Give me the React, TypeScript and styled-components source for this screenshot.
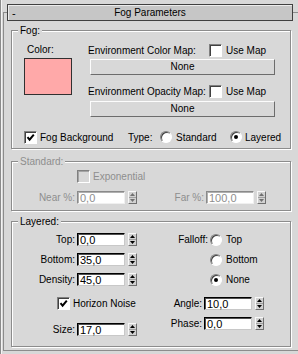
import React from "react";
import styled, { createGlobalStyle } from "styled-components";

const BG = "#d8d8d8";
const DIS = "#8e8e8e";

const GlobalStyle = createGlobalStyle`
  html, body { margin: 0; padding: 0; background: ${BG}; }
  #root { width: 298px; height: 354px; }
`;

const Page = styled.div`
  box-sizing: border-box;
  width: 298px;
  height: 354px;
  overflow: hidden;
  background: ${BG};
  border-left: 1px solid #8c8c8c;
  box-shadow: inset 1px 0 0 #f4f4f4;
  padding: 12px 0 0 2px;
  font-family: "Liberation Sans", Arial, sans-serif;
  font-size: 10px;
  color: #000;
`;

const Rollout = styled.section`
  box-sizing: border-box;
  width: 296px;
  flex-shrink: 0;
  border: 1px solid #8c8c8c;
  padding-bottom: 3px;
`;

const TitleBar = styled.div`
  box-sizing: border-box;
  height: 17px;
  margin: -9px 5px 0 3px;
  display: grid;
  grid-template-columns: 20px 1fr 20px;
  align-items: center;
  background: #c6c6c6;
  border: 1px solid #404040;
  box-shadow: inset 1px 1px 0 #ececec;
  line-height: 14px;
`;

const Collapse = styled.span`
  padding-left: 4px;
  font-size: 11px;
`;

const TitleText = styled.span`
  text-align: center;
`;

const Group = styled.div<{ $mt: number; $pt: number; $pb: number }>`
  position: relative;
  margin: ${(p) => p.$mt}px 7px 0 7px;
  border: 1px solid #8c8c8c;
  box-shadow: inset 1px 1px 0 #fff, 1px 1px 0 #fff;
  padding: ${(p) => p.$pt}px 0 ${(p) => p.$pb}px 0;
`;

const GroupLabel = styled.span<{ $disabled?: boolean }>`
  position: absolute;
  top: -7px;
  left: 6px;
  padding: 0 2px;
  background: ${BG};
  line-height: 13px;
  color: ${(p) => (p.$disabled ? DIS : "#000")};
`;

/* ---------- Fog group ---------- */
const FogTop = styled.div`
  display: grid;
  grid-template-columns: 48px 187px;
  column-gap: 16px;
  padding-left: 12px;
`;

const Column = styled.div`
  display: flex;
  flex-direction: column;
`;

const ColorLabel = styled.span`
  height: 14px;
  line-height: 14px;
  padding-left: 3px;
`;

const Swatch = styled.div`
  box-sizing: border-box;
  margin-top: 1px;
  width: 48px;
  height: 37px;
  background: #ffa9a9;
  border: 1px solid #303030;
`;

const MapRow = styled.div<{ $mt: number }>`
  display: grid;
  grid-template-columns: 121px 13px auto;
  align-items: center;
  height: 14px;
  margin-top: ${(p) => p.$mt}px;
  white-space: nowrap;
`;

const UseMap = styled.span`
  margin-left: 4px;
`;

const MapButton = styled.div<{ $mt: number }>`
  box-sizing: border-box;
  margin: ${(p) => p.$mt}px 0 0 2px;
  width: 185px;
  height: 16px;
  line-height: 14px;
  text-align: center;
  background: ${BG};
  border: 1px solid;
  border-color: #fcfcfc #6c6c6c #6c6c6c #fcfcfc;
`;

const OptionRow = styled.div`
  display: grid;
  grid-template-columns: 16px 88px 32px 16px 54px 15px auto;
  align-items: center;
  height: 14px;
  margin-top: 13px;
  padding-left: 12px;
  white-space: nowrap;
`;

/* ---------- controls ---------- */
const Box = styled.span<{ $disabled?: boolean }>`
  box-sizing: border-box;
  width: 13px;
  height: 13px;
  display: inline-flex;
  align-items: center;
  justify-content: center;
  background: ${(p) => (p.$disabled ? BG : "#fff")};
  border: 1px solid;
  border-color: #808080 #fff #fff #808080;
  box-shadow: inset 1px 1px 0 ${(p) => (p.$disabled ? "#a4a4a4" : "#404040")};
`;

const Check = ({ on, disabled }: { on?: boolean; disabled?: boolean }) => (
  <Box $disabled={disabled}>
    {on && (
      <svg width="9" height="9" viewBox="0 0 9 9">
        <path d="M1.5 4.2 L3.6 6.6 L7.8 1.6" stroke="#000" strokeWidth="2" fill="none" />
      </svg>
    )}
  </Box>
);

const RadioDot = styled.span<{ $on?: boolean }>`
  box-sizing: border-box;
  width: 12px;
  height: 12px;
  border-radius: 50%;
  background: #fff;
  border: 1px solid;
  border-color: #808080 #fff #fff #808080;
  box-shadow: inset 1px 1px 0 #404040;
  display: inline-flex;
  align-items: center;
  justify-content: center;
  &::after {
    content: "";
    width: 4px;
    height: 4px;
    border-radius: 50%;
    background: #000;
    display: ${(p) => (p.$on ? "block" : "none")};
  }
`;

const SpinRow = styled.div<{ $mt?: number }>`
  display: flex;
  align-items: center;
  height: 13px;
  margin-top: ${(p) => p.$mt ?? 0}px;
`;

const SpinLabel = styled.span<{ $w: number; $disabled?: boolean }>`
  box-sizing: border-box;
  width: ${(p) => p.$w}px;
  text-align: right;
  padding-right: 2px;
  white-space: nowrap;
  color: ${(p) => (p.$disabled ? DIS : "#000")};
`;

const Field = styled.span<{ $disabled?: boolean }>`
  box-sizing: border-box;
  width: 48px;
  height: 13px;
  background: #fff;
  border: 1px solid;
  border-color: ${(p) => (p.$disabled ? "#8a8a8a #f0f0f0 #f0f0f0 #8a8a8a" : "#000 #c8c8c8 #c8c8c8 #000")};
  box-shadow: inset 1px 1px 0 ${(p) => (p.$disabled ? "#b0b0b0" : "#505050")};
  padding-left: 2px;
  font-size: 11px;
  line-height: 12px;
  color: ${(p) => (p.$disabled ? DIS : "#000")};
`;

const Arrows = styled.span`
  box-sizing: border-box;
  margin-left: 3px;
  width: 9px;
  height: 13px;
  display: flex;
  flex-direction: column;
  border: 1px solid;
  border-color: #f8f8f8 #707070 #707070 #f8f8f8;
  background: #d2d2d2;
`;

const ArrowHalf = styled.span<{ $top?: boolean }>`
  flex: 1;
  display: flex;
  align-items: center;
  justify-content: center;
  border-bottom: ${(p) => (p.$top ? "1px solid #a0a0a0" : "none")};
`;

const ArrowGlyph = ({ up, disabled }: { up?: boolean; disabled?: boolean }) => (
  <svg width="5" height="3" viewBox="0 0 5 3">
    <path d={up ? "M0 3 L2.5 0 L5 3 Z" : "M0 0 L5 0 L2.5 3 Z"} fill={disabled ? "#707070" : "#000"} />
  </svg>
);

const Spinner = ({
  label,
  value,
  w,
  disabled,
  mt,
}: {
  label: string;
  value: string;
  w: number;
  disabled?: boolean;
  mt?: number;
}) => (
  <SpinRow $mt={mt}>
    <SpinLabel $w={w} $disabled={disabled}>
      {label}
    </SpinLabel>
    <Field $disabled={disabled}>{value}</Field>
    <Arrows>
      <ArrowHalf $top>
        <ArrowGlyph up disabled={disabled} />
      </ArrowHalf>
      <ArrowHalf>
        <ArrowGlyph disabled={disabled} />
      </ArrowHalf>
    </Arrows>
  </SpinRow>
);

/* ---------- Standard ---------- */
const CheckLine = styled.div<{ $indent: number; $disabled?: boolean; $h?: number }>`
  display: flex;
  align-items: center;
  height: ${(p) => p.$h ?? 14}px;
  padding-left: ${(p) => p.$indent}px;
  white-space: nowrap;
  color: ${(p) => (p.$disabled ? DIS : "#000")};
`;

const CheckText = styled.span`
  margin-left: 3px;
`;

const PairRow = styled.div<{ $mt: number }>`
  display: flex;
  margin-top: ${(p) => p.$mt}px;
`;

/* ---------- Layered ---------- */
const LayerRow = styled.div<{ $mt: number }>`
  display: grid;
  grid-template-columns: 125px auto;
  align-items: start;
  margin-top: ${(p) => p.$mt}px;
`;

const RadioLine = styled.div`
  display: flex;
  align-items: center;
  height: 13px;
  white-space: nowrap;
`;

const RadioLabelCell = styled.span`
  box-sizing: border-box;
  width: 73px;
  text-align: right;
  padding-right: 2px;
`;

const RadioText = styled.span`
  margin-left: 4px;
`;

export default function App() {
  return (
    <Page>
      <GlobalStyle />
      <Rollout>
        <TitleBar>
          <Collapse>-</Collapse>
          <TitleText>Fog Parameters</TitleText>
          <span />
        </TitleBar>

        <Group $mt={9} $pt={12} $pb={4}>
          <GroupLabel>Fog:</GroupLabel>
          <FogTop>
            <Column>
              <ColorLabel>Color:</ColorLabel>
              <Swatch />
            </Column>
            <Column>
              <MapRow $mt={0}>
                <span>Environment Color Map:</span>
                <Check />
                <UseMap>Use Map</UseMap>
              </MapRow>
              <MapButton $mt={2}>None</MapButton>
              <MapRow $mt={9}>
                <span>Environment Opacity Map:</span>
                <Check />
                <UseMap>Use Map</UseMap>
              </MapRow>
              <MapButton $mt={3}>None</MapButton>
            </Column>
          </FogTop>
          <OptionRow>
            <Check on />
            <span>Fog Background</span>
            <span>Type:</span>
            <RadioDot />
            <span>Standard</span>
            <RadioDot $on />
            <span>Layered</span>
          </OptionRow>
        </Group>

        <Group $mt={12} $pt={7} $pb={6}>
          <GroupLabel $disabled>Standard:</GroupLabel>
          <CheckLine $indent={65} $disabled>
            <Check disabled />
            <CheckText>Exponential</CheckText>
          </CheckLine>
          <PairRow $mt={8}>
            <Spinner label="Near %:" value="0,0" w={65} disabled />
            <Spinner label="Far %:" value="100,0" w={69} disabled />
          </PairRow>
        </Group>

        <Group $mt={10} $pt={11} $pb={10}>
          <GroupLabel>Layered:</GroupLabel>
          <LayerRow $mt={0}>
            <Spinner label="Top:" value="0,0" w={65} />
            <RadioLine>
              <RadioLabelCell>Falloff:</RadioLabelCell>
              <RadioDot />
              <RadioText>Top</RadioText>
            </RadioLine>
          </LayerRow>
          <LayerRow $mt={7}>
            <Spinner label="Bottom:" value="35,0" w={65} />
            <RadioLine>
              <RadioLabelCell />
              <RadioDot />
              <RadioText>Bottom</RadioText>
            </RadioLine>
          </LayerRow>
          <LayerRow $mt={7}>
            <Spinner label="Density:" value="45,0" w={65} />
            <RadioLine>
              <RadioLabelCell />
              <RadioDot $on />
              <RadioText>None</RadioText>
            </RadioLine>
          </LayerRow>
          <LayerRow $mt={11}>
            <CheckLine $indent={45} $h={13}>
              <Check on />
              <CheckText>Horizon Noise</CheckText>
            </CheckLine>
            <Spinner label="Angle:" value="10,0" w={67} />
          </LayerRow>
          <LayerRow $mt={7}>
            <Spinner label="Size:" value="17,0" w={65} mt={6} />
            <Spinner label="Phase:" value="0,0" w={67} />
          </LayerRow>
        </Group>
      </Rollout>
    </Page>
  );
}
